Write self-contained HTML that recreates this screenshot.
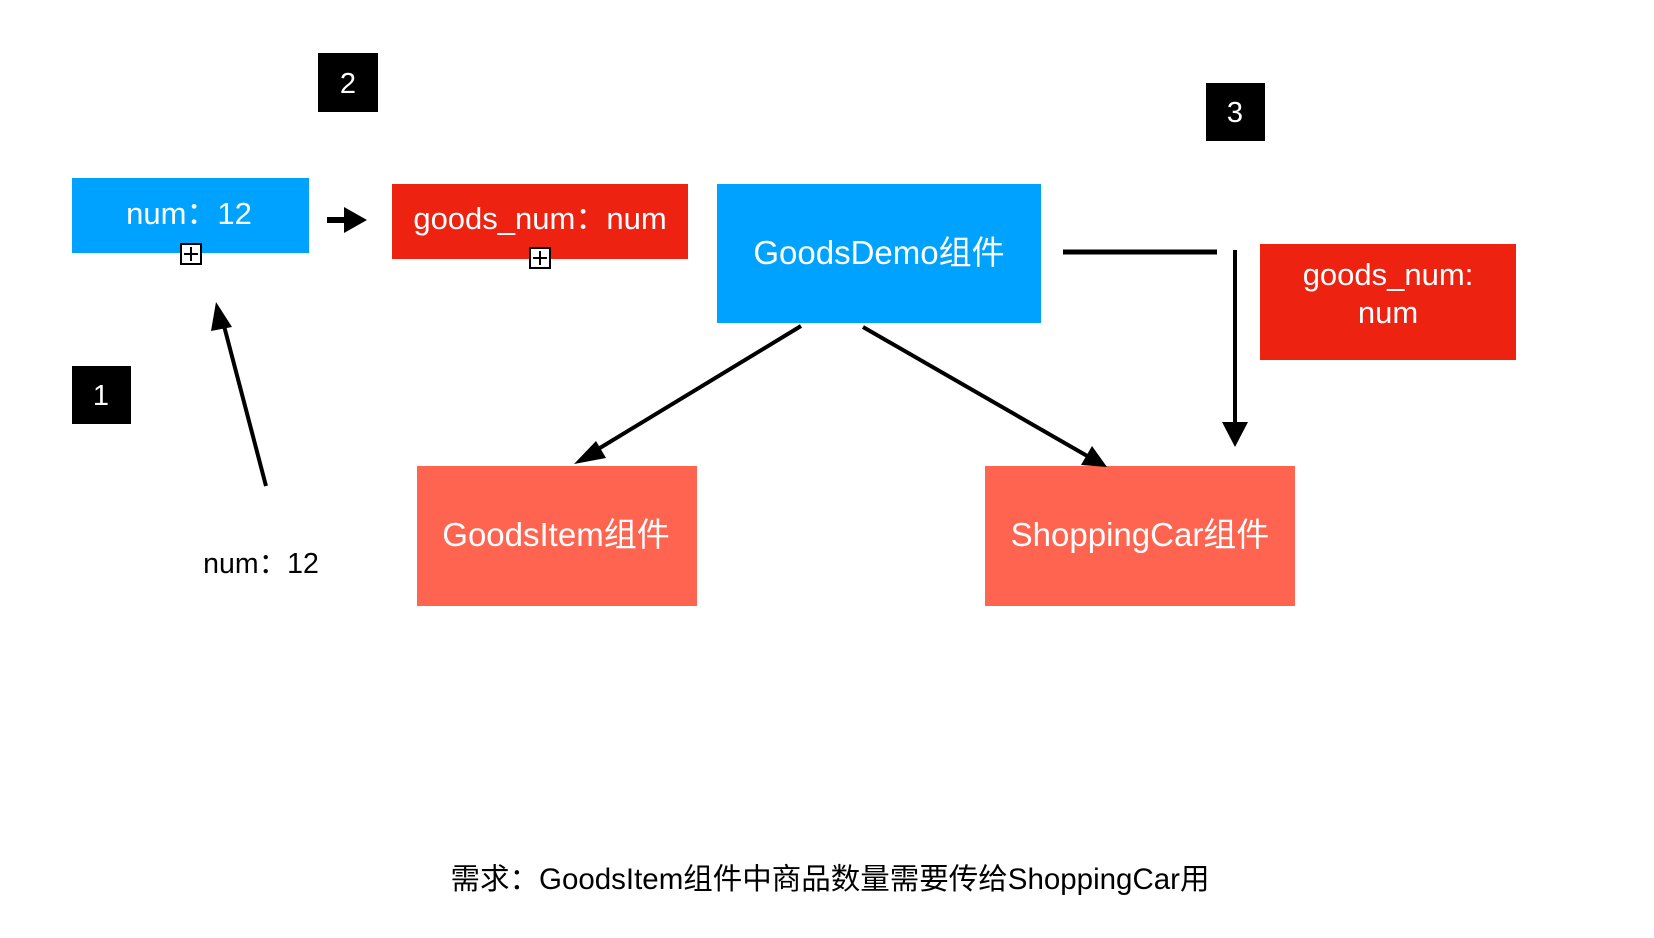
<!DOCTYPE html>
<html><head><meta charset="utf-8"><style>
html,body{margin:0;padding:0;background:#fff;width:1654px;height:938px;overflow:hidden}
svg text{font-family:"Liberation Sans","Noto Sans CJK SC",sans-serif}
</style></head><body>
<svg width="1654" height="938" viewBox="0 0 1654 938" xmlns="http://www.w3.org/2000/svg">
<rect x="318" y="53" width="60" height="59" fill="#000"/><text x="348" y="93" font-size="29" fill="#fff" text-anchor="middle">2</text>
<rect x="1206" y="83" width="59" height="58" fill="#000"/><text x="1235" y="122" font-size="29" fill="#fff" text-anchor="middle">3</text>
<rect x="72" y="366" width="59" height="58" fill="#000"/><text x="101" y="405" font-size="29" fill="#fff" text-anchor="middle">1</text>
<rect x="72" y="178" width="237" height="75" fill="#00a2ff"/>
<text x="189" y="224" font-size="31" fill="#fff" text-anchor="middle">num：12</text>
<rect x="181" y="244" width="20" height="20" fill="#fff" stroke="#000" stroke-width="2"/><path d="M191,247v14M184,254h14" stroke="#000" stroke-width="2"/>
<rect x="392" y="184" width="296" height="75" fill="#ee2211"/>
<text x="540" y="229" font-size="31" fill="#fff" text-anchor="middle">goods_num：num</text>
<rect x="530" y="248" width="20" height="20" fill="#fff" stroke="#000" stroke-width="2"/><path d="M540,251v14M533,258h14" stroke="#000" stroke-width="2"/>
<path d="M327,220h22" stroke="#000" stroke-width="6"/><path d="M344,207L367,220L344,233Z" fill="#000"/>
<rect x="717" y="184" width="324" height="139" fill="#00a2ff"/>
<text x="879" y="264" font-size="33" fill="#fff" text-anchor="middle">GoodsDemo组件</text>
<path d="M1063,252H1217" stroke="#000" stroke-width="5"/>
<path d="M1235,250V430" stroke="#000" stroke-width="4"/><path d="M1222,422L1235,447L1248,422Z" fill="#000"/>
<rect x="1260" y="244" width="256" height="116" fill="#ee2211"/>
<text x="1388" y="285" font-size="31" fill="#fff" text-anchor="middle">goods_num:</text>
<text x="1388" y="323" font-size="31" fill="#fff" text-anchor="middle">num</text>
<rect x="417" y="466" width="280" height="140" fill="#ff6450"/>
<text x="556" y="546" font-size="33" fill="#fff" text-anchor="middle">GoodsItem组件</text>
<rect x="985" y="466" width="310" height="140" fill="#ff6450"/>
<text x="1140" y="546" font-size="33" fill="#fff" text-anchor="middle">ShoppingCar组件</text>
<path d="M801,326L590,454" stroke="#000" stroke-width="4"/><path d="M574,464L596,441L606,458Z" fill="#000"/>
<path d="M863,327L1089,457" stroke="#000" stroke-width="4"/><path d="M1107,467L1081,465L1092,446Z" fill="#000"/>
<path d="M266,486L223,322" stroke="#000" stroke-width="4"/><path d="M216,302L232,327L211,331Z" fill="#000"/>
<text x="261" y="573" font-size="28.5" fill="#000" text-anchor="middle">num：12</text>
<text x="830" y="889" font-size="29.5" fill="#000" text-anchor="middle">需求：GoodsItem组件中商品数量需要传给ShoppingCar用</text>
</svg>
</body></html>
